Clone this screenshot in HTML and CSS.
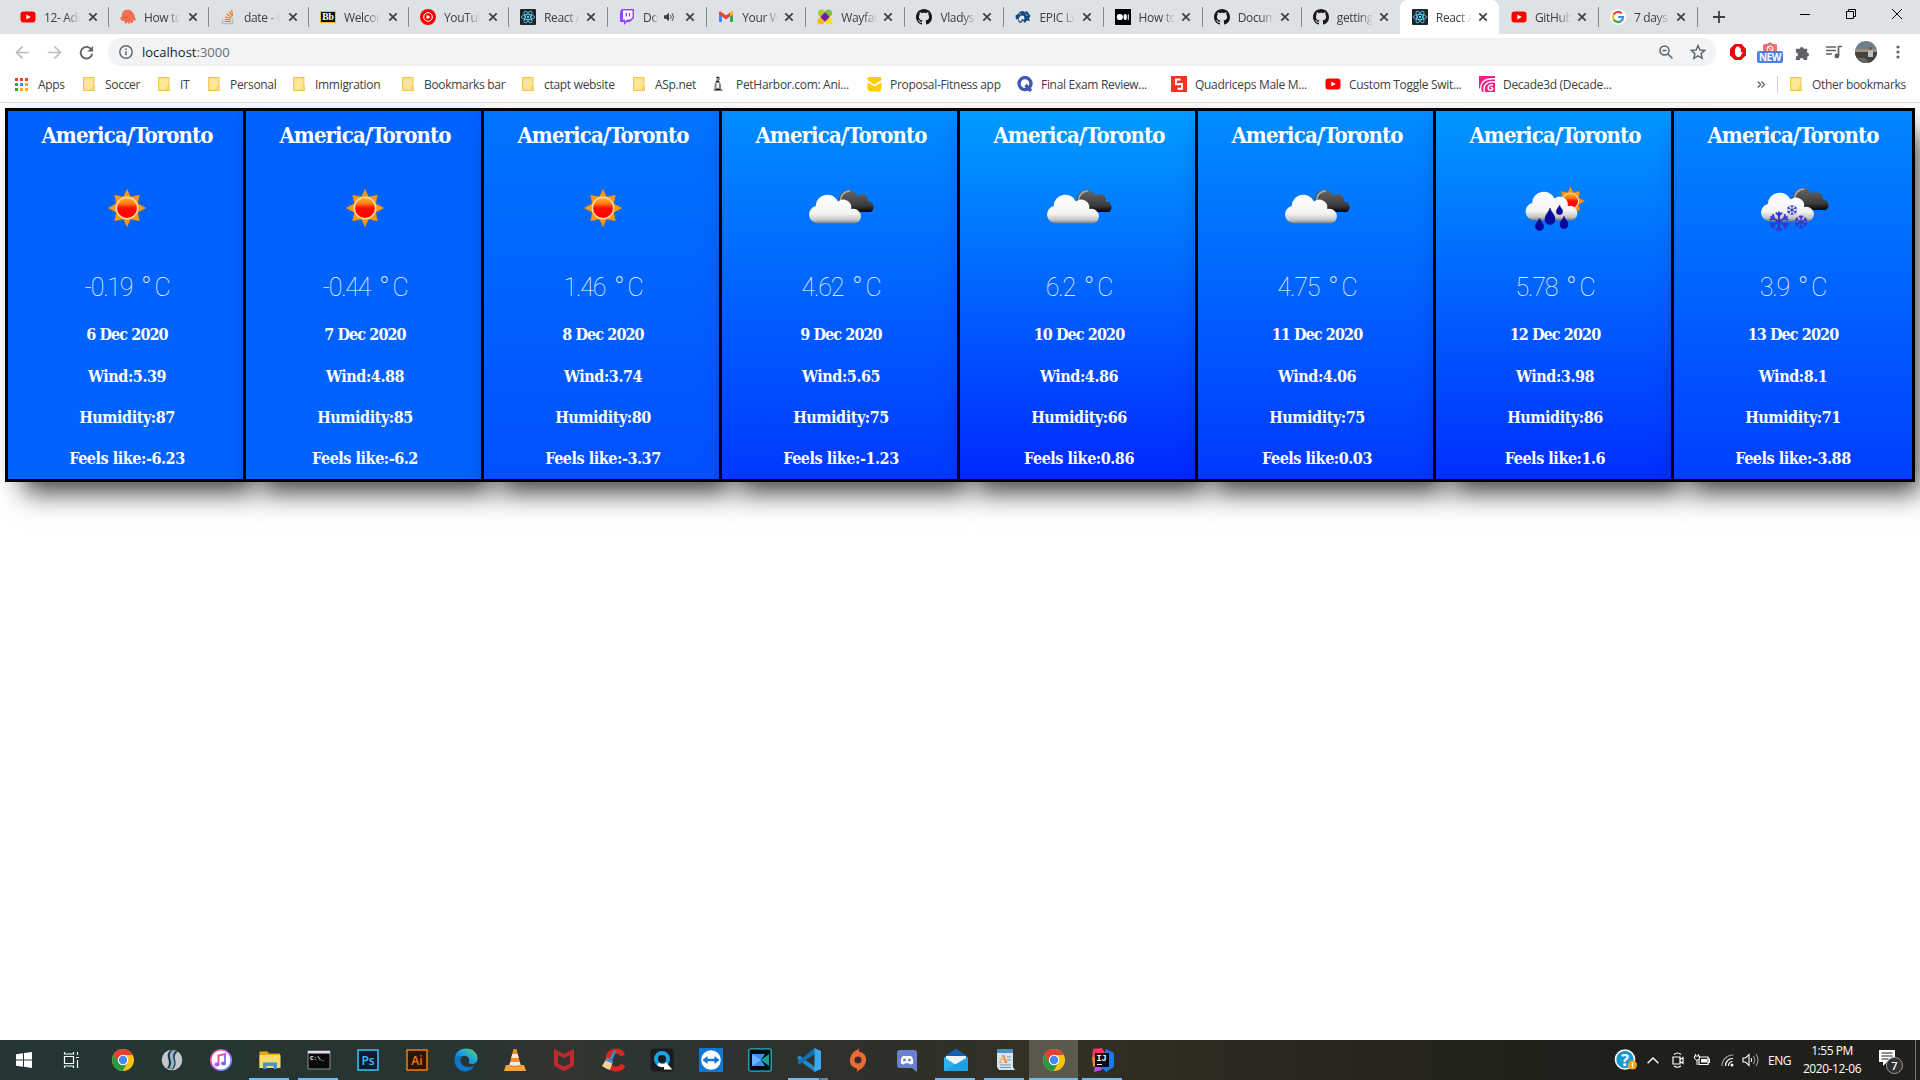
FILE: index.html
```html
<!DOCTYPE html>
<html lang="en">
<head>
<meta charset="utf-8">
<title>React App</title>
<link rel="stylesheet" href="styles.css">
</head>
<body>
<svg class="defs" aria-hidden="true">
  <defs>
    <linearGradient id="g-white" x1="0" y1="0" x2="0" y2="1"><stop offset="0" stop-color="#fff"/><stop offset=".66" stop-color="#f4f4f4"/><stop offset=".88" stop-color="#c4c4c4"/><stop offset="1" stop-color="#777"/></linearGradient>
    <linearGradient id="g-dark" x1="0" y1="0" x2="0" y2="1"><stop offset="0" stop-color="#666"/><stop offset=".7" stop-color="#3c3c3c"/><stop offset="1" stop-color="#050505"/></linearGradient>
    <linearGradient id="g-sun" x1="0" y1="0" x2="0" y2="1"><stop offset="0" stop-color="#ffb52e"/><stop offset=".3" stop-color="#ff7a10"/><stop offset=".5" stop-color="#ff0c00"/><stop offset="1" stop-color="#f00"/></linearGradient>
    <linearGradient id="g-edge" x1="0" y1="1" x2="1" y2="0"><stop offset="0" stop-color="#0c59a4"/><stop offset=".5" stop-color="#1b9de2"/><stop offset="1" stop-color="#5fdc62"/></linearGradient>
    <linearGradient id="g-itunes" x1="0" y1="0" x2="1" y2="1"><stop offset="0" stop-color="#fb4d6e"/><stop offset=".5" stop-color="#c35be8"/><stop offset="1" stop-color="#3fa9f5"/></linearGradient>
  </defs>
  <symbol id="youtube" viewBox="0 0 16 16"><rect x=".5" y="2.5" width="15" height="11" rx="3" fill="#f00"/><path d="M6.3 5.4 10.8 8l-4.5 2.6z" fill="#fff"/></symbol>
  <symbol id="hippo" viewBox="0 0 16 16"><path d="M2 6C2 2 5 .3 8.500.8c4 .5 5.500 4 6.500 7.700l1 2.500-1.500.8-1.500-1V14h-2v-1.500l-1 2H8v-2l-1.500 2H5l-.5-2.500H2.500L.3 10C.3 8.500 1.500 8 2 6z" fill="#f0714f"/><path d="M3 8.500h5" stroke="#c9553a" stroke-width=".8"/></symbol>
  <symbol id="stack" viewBox="0 0 16 16"><path d="M2.500 9.500v5h10v-5" fill="none" stroke="#bcbbbb" stroke-width="1.400"/><path d="M4.500 12.500h6M4.600 10.300l6 .6M5.200 7.900l5.700 1.600M6.700 5.100l5 3.100M9 2.400l3.600 4.700M11.600 .8l1 5.500" stroke="#f48024" stroke-width="1.200"/></symbol>
  <symbol id="ytmusic" viewBox="0 0 16 16"><circle cx="8" cy="8" r="8" fill="#f00"/><circle cx="8" cy="8" r="4.300" fill="none" stroke="#fff"/><path d="m6.500 5.700 4 2.300-4 2.300z" fill="#fff"/></symbol>
  <symbol id="react" viewBox="0 0 16 16"><rect width="16" height="16" rx="1" fill="#20232a"/><g fill="none" stroke="#61dafb" stroke-width=".8"><ellipse cx="8" cy="8" rx="6.600" ry="2.600"/><ellipse cx="8" cy="8" rx="6.600" ry="2.600" transform="rotate(60 8 8)"/><ellipse cx="8" cy="8" rx="6.600" ry="2.600" transform="rotate(120 8 8)"/></g><circle cx="8" cy="8" r="1.200" fill="#61dafb"/></symbol>
  <symbol id="twitch" viewBox="0 0 16 16"><path d="M2.500 0H15v9l-4 4H8l-3 3v-3H1V3z" fill="#9146ff"/><path d="M4 1.500h9.500v6.800L11 10.500H8l-2 2v-2H4z" fill="#fff"/><path d="M7.300 4v3.500M10.500 4v3.500" stroke="#9146ff" stroke-width="1.400"/></symbol>
  <symbol id="gmail" viewBox="0 0 16 16"><path d="M1 3.500V13h3V7.500z" fill="#4285f4"/><path d="M15 3.500V13h-3V7.500z" fill="#34a853"/><path d="M1 3.500c0-1 1.300-1.300 2-.7l5 3.800 5-3.800c.7-.6 2-.3 2 .7v1.700l-7 5.300-7-5.300z" fill="#ea4335"/><path d="M12 3.600 13 2.800c.7-.6 2-.3 2 .7v1.700l-3 2.300z" fill="#fbbc04"/></symbol>
  <symbol id="wayfair" viewBox="0 0 16 16"><circle cx="4.500" cy="4" r="3.600" fill="#a4ce39"/><circle cx="11.500" cy="4" r="3.600" fill="#7ac142"/><circle cx="4" cy="12" r="3.600" fill="#fdb813"/><circle cx="12" cy="12" r="3.600" fill="#f7e51b"/><path d="m8 3.300 4.700 4.700L8 12.700 3.300 8z" fill="#7b189f"/></symbol>
  <symbol id="github" viewBox="0 0 16 16"><path d="M8 0C3.580 0 0 3.580 0 8c0 3.540 2.290 6.530 5.470 7.590.4.070.55-.17.55-.38 0-.19-.01-.82-.01-1.490-2.010.37-2.530-.49-2.690-.94-.09-.23-.48-.94-.82-1.130-.28-.15-.68-.52-.01-.53.63-.01 1.080.58 1.230.82.72 1.210 1.870.87 2.330.66.070-.52.28-.87.51-1.070-1.780-.2-3.640-.89-3.640-3.950 0-.87.31-1.590.82-2.150-.08-.2-.36-1.020.08-2.120 0 0 .67-.21 2.200.82.64-.18 1.320-.27 2-.27s1.360.09 2 .27c1.530-1.040 2.200-.82 2.200-.82.44 1.100.16 1.920.08 2.120.51.56.82 1.270.82 2.150 0 3.070-1.870 3.750-3.650 3.950.29.25.54.73.54 1.480 0 1.070-.01 1.930-.01 2.200 0 .21.15.46.55.38A8.010 8.010 0 0 0 16 8c0-4.420-3.580-8-8-8z" fill="#191717"/></symbol>
  <symbol id="epic" viewBox="0 0 16 16"><path d="M.5 6.500 3 5l2-2.500L8 2l2 1 2-1 3.500 5L14 9.500 15 12l-3-.5-2.500 2.500L8 11.500l-2 2.500-2.500-1L3 10l-2 .5z" fill="#174a7a"/><path d="M3.500 9.500 6 6.500l3 .5.5 2.500L8 11l-1-1.500-1 3-1.500-.5z" fill="#dcebf6"/><path d="m10.500 4.500 2 2.500M4 5.500l2-1.500" stroke="#9cc0dd"/></symbol>
  <symbol id="medium" viewBox="0 0 16 16"><rect width="16" height="16" fill="#000"/><circle cx="4.800" cy="8" r="3.100" fill="#fff"/><ellipse cx="10.200" cy="8" rx="1.700" ry="3" fill="#fff"/><path d="M13.300 5.200v5.600" stroke="#fff"/></symbol>
  <symbol id="google" viewBox="0 0 16 16"><circle cx="8" cy="8" r="8" fill="#fff"/><g fill="none" stroke-width="2.200"><path d="M11.700 4.500A5 5 0 0 0 3.600 5.700" stroke="#ea4335"/><path d="M3.600 5.700a5 5 0 0 0 0 4.700" stroke="#fbbc05"/><path d="M3.600 10.400a5 5 0 0 0 7.700 1.400" stroke="#34a853"/><path d="M11.300 11.800A5 5 0 0 0 13 8H8.200" stroke="#4285f4"/></g></symbol>
  <symbol id="close" viewBox="0 0 10 10"><path d="m1.300 1.300 7.400 7.400M8.700 1.300 1.300 8.700" stroke="#3c4043" stroke-width="1.700"/></symbol>
  <symbol id="folder" viewBox="0 0 16 16"><path d="M2.600 1.600h10.300v12.800H2.600z" fill="#ffe695" stroke="#edc84e" stroke-width="1.100"/><path d="M11.600 10.600h1.900v3.800h-1.900z" fill="#ffe695" stroke="#edc84e" stroke-width=".9"/></symbol>
  <symbol id="apps" viewBox="0 0 16 16"><path d="M1 2h3v3H1zM6 2h3v3H6zM11 2h3v3h-3z" fill="#ea4335"/><path d="M1 7h3v3H1zM1 12h3v3H1z" fill="#34a050"/><path d="M6 7h3v3H6z" fill="#4285f4"/><path d="M11 7h3v3h-3zM6 12h3v3H6zM11 12h3v3h-3z" fill="#f9ab00"/></symbol>
  <symbol id="pet" viewBox="0 0 16 16"><path d="M4.500 .5h3L8 3.500 7 4.500l2 4V13l2.500 2H1.500l1-3V8l2-4z" fill="#888"/><path d="M4.500 7H7v5H4.500z" fill="#eee"/><path d="M4.500 1.500h2M3.500 13.500h5M4 5.500h3" stroke="#111"/></symbol>
  <symbol id="proposal" viewBox="0 0 16 16"><path d="M1.500 2.500Q1.500 1 3 1h11q1.500 0 1.500 1.500V4l-7 4.500-7-4.500z" fill="#fc0"/><path d="m1.500 6.500 7 4 7-4V12q0 3.500-3.500 3.500H5Q1.500 15.500 1.500 12z" fill="#fc0"/></symbol>
  <symbol id="quiz" viewBox="0 0 16 16"><circle cx="8" cy="7.600" r="6" fill="none" stroke="#4257b2" stroke-width="3.400"/><path d="m8.500 9 5.500 6" stroke="#4257b2" stroke-width="3.400"/></symbol>
  <symbol id="quad" viewBox="0 0 16 16"><rect width="16" height="16" fill="#ee3524"/><path d="M9.500 3.500H5v4.700h3.500M6.500 12.800H11V8H8" fill="none" stroke="#fff" stroke-width="1.900"/></symbol>
  <symbol id="decade" viewBox="0 0 16 16"><path d="M0 0h16v16H3.500L0 12z" fill="#f81b84"/><path d="M2 16C0 7 5 2 16 2.700M5.500 16C3.500 9 8 5 16 6" fill="none" stroke="#fff" stroke-width="1.500"/><path d="M14 9c-5-1-6.500 4.500-3 5.200 3 .3 4-3.200.5-2.700" fill="none" stroke="#fff" stroke-width="1.500"/></symbol>
  <symbol id="chrome" viewBox="0 0 24 24"><circle cx="12" cy="12" r="11" fill="#fbc116"/><path d="M2.500 6.500A11 11 0 0 1 21.800 7H12a5.200 5.200 0 0 0-4.700 7.300z" fill="#e34133"/><path d="M2.500 6.500A11 11 0 0 0 11.500 23l5-8.500a5.200 5.200 0 0 1-9 0z" fill="#279847"/><circle cx="12" cy="12" r="5.200" fill="#fff"/><circle cx="12" cy="12" r="4.200" fill="#4688f4"/></symbol>

  <symbol id="star" viewBox="-20 -20 40 40"><path d="M0-19 3.600-11.200 12.500-13 10.800-4.500 19 0 10.800 4.500 12.500 13 3.600 11.200 0 19-3.600 11.200-12.500 13-10.800 4.500-19 0-10.800-4.500-12.500-13-3.600-11.200z" fill="#f59a17" stroke="#c07a30" stroke-width=".5"/><circle r="10.700" fill="url(#g-sun)" stroke="#ffdca6" stroke-width="1.500"/></symbol>
  <symbol id="cloud-w" viewBox="0 0 54 31" preserveAspectRatio="none"><path d="M9 30.500a9 9 0 0 1-1.500-17.600A11.500 11.500 0 0 1 29.500 8.500 8 8 0 0 1 42.500 16a7.300 7.300 0 0 1 4 14.500z" fill="url(#g-white)"/></symbol>
  <symbol id="cloud-d" viewBox="0 0 36 23" preserveAspectRatio="none"><path d="M2 16A10 10 0 0 1 9 1a8.500 8.500 0 0 1 8.500 5.500 6 6 0 0 1 10 5.500A5.500 5.500 0 0 1 30.500 22H14z" fill="url(#g-dark)"/><path d="M2.500 12C2 6 6 2 11 2" fill="none" stroke="#aaa" stroke-width="1.500"/></symbol>
  <symbol id="drop" viewBox="0 0 10 16" preserveAspectRatio="none"><path d="M5 0c1 4 4.700 6.500 4.700 10.500a4.700 5 0 0 1-9.400 0C.3 6.500 4 4 5 0z" fill="#0809a0" stroke="#10106a" stroke-width=".5"/></symbol>
  <symbol id="flake" viewBox="-10 -10 20 20"><g stroke="#3437c4" stroke-width="1.800" fill="none"><path d="M0-9.500v19M-3-8.500l3 3 3-3M-3 8.500l3-3 3 3"/><path transform="rotate(60)" d="M0-9.500v19M-3-8.500l3 3 3-3M-3 8.500l3-3 3 3"/><path transform="rotate(120)" d="M0-9.500v19M-3-8.500l3 3 3-3M-3 8.500l3-3 3 3"/></g></symbol>
  <symbol id="w-sun" viewBox="0 0 100 100"><use href="#star" x="30" y="30" width="40" height="40"/></symbol>
  <symbol id="w-clouds" viewBox="0 0 100 100"><use href="#cloud-d" x="47" y="31" width="39" height="24"/><use href="#cloud-w" x="17" y="35" width="55" height="31"/></symbol>
  <symbol id="w-rain" viewBox="0 0 100 100"><use href="#star" x="50.500" y="28" width="30" height="30"/><use href="#cloud-w" x="19.500" y="32" width="55" height="31"/><use href="#drop" x="30" y="60" width="9" height="13"/><use href="#drop" x="39.500" y="50" width="11" height="17"/><use href="#drop" x="51" y="47" width="7" height="10"/><use href="#drop" x="54.500" y="58" width="9" height="13"/></symbol>
  <symbol id="w-snow" viewBox="0 0 100 100"><use href="#cloud-d" x="49" y="29" width="40" height="24"/><use href="#cloud-w" x="17" y="33" width="56" height="31"/><use href="#flake" x="25.500" y="53" width="21" height="21"/><use href="#flake" x="43.500" y="46.500" width="11" height="11"/><use href="#flake" x="51" y="57" width="14" height="14"/></symbol>
</svg>

<header class="tabs">
  <div class="tab wide"><svg class="fav"><use href="#youtube"/></svg><span class="name">12- Add</span><svg class="x"><use href="#close"/></svg></div>
  <div class="tab wide"><svg class="fav"><use href="#hippo"/></svg><span class="name">How to</span><svg class="x"><use href="#close"/></svg></div>
  <div class="tab wide"><svg class="fav"><use href="#stack"/></svg><span class="name">date - G</span><svg class="x"><use href="#close"/></svg></div>
  <div class="tab wide"><svg class="fav" viewBox="0 0 16 16"><rect x=".5" y="2.500" width="15" height="11" fill="#111" stroke="#f2b632"/><text x="8" y="11.300" font-family="Liberation Serif" font-weight="700" font-size="9.500" letter-spacing="0" text-anchor="middle" fill="#fff">Bb</text></svg><span class="name">Welcome</span><svg class="x"><use href="#close"/></svg></div>
  <div class="tab wide"><svg class="fav"><use href="#ytmusic"/></svg><span class="name">YouTube</span><svg class="x"><use href="#close"/></svg></div>
  <div class="tab"><svg class="fav"><use href="#react"/></svg><span class="name">React A</span><svg class="x"><use href="#close"/></svg></div>
  <div class="tab"><svg class="fav"><use href="#twitch"/></svg><span class="name short">Doc</span><svg class="sound" viewBox="0 0 10 10"><path d="M0 3.300h2L5 .8v8.400L2 6.700H0z" fill="#3c4043"/><path d="M6.500 3q1.400 2 0 4M8.200 1.200q2.600 3.800 0 7.600" fill="none" stroke="#3c4043" stroke-width=".9"/></svg><svg class="x"><use href="#close"/></svg></div>
  <div class="tab"><svg class="fav"><use href="#gmail"/></svg><span class="name">Your We</span><svg class="x"><use href="#close"/></svg></div>
  <div class="tab"><svg class="fav"><use href="#wayfair"/></svg><span class="name">Wayfair</span><svg class="x"><use href="#close"/></svg></div>
  <div class="tab"><svg class="fav"><use href="#github"/></svg><span class="name">Vladysl</span><svg class="x"><use href="#close"/></svg></div>
  <div class="tab"><svg class="fav"><use href="#epic"/></svg><span class="name">EPIC Le</span><svg class="x"><use href="#close"/></svg></div>
  <div class="tab"><svg class="fav"><use href="#medium"/></svg><span class="name">How to</span><svg class="x"><use href="#close"/></svg></div>
  <div class="tab"><svg class="fav"><use href="#github"/></svg><span class="name">Docume</span><svg class="x"><use href="#close"/></svg></div>
  <div class="tab before"><svg class="fav"><use href="#github"/></svg><span class="name">getting-</span><svg class="x"><use href="#close"/></svg></div>
  <div class="tab active"><svg class="fav"><use href="#react"/></svg><span class="name">React A</span><svg class="x"><use href="#close"/></svg></div>
  <div class="tab"><svg class="fav"><use href="#youtube"/></svg><span class="name">GitHub</span><svg class="x"><use href="#close"/></svg></div>
  <div class="tab"><svg class="fav"><use href="#google"/></svg><span class="name">7 days f</span><svg class="x"><use href="#close"/></svg></div>
  <svg class="plus" viewBox="0 0 12 12"><path d="M6 0v12M0 6h12" stroke="#3c4043" stroke-width="1.800"/></svg>
  <div class="window-buttons">
    <svg viewBox="0 0 10 10"><path d="M0 5.500h10" stroke="#000"/></svg>
    <svg viewBox="0 0 10 10"><path d="M.5 2.500h7v7h-7zM2.500 2V.5h7v7H8" fill="none" stroke="#000"/></svg>
    <svg viewBox="0 0 10 10"><path d="m0 0 10 10M10 0 0 10" stroke="#000"/></svg>
  </div>
</header>

<div class="toolbar">
  <div class="nav">
    <svg viewBox="0 0 16 16"><path d="M15 8H2M8 1.700 1.700 8 8 14.300" fill="none" stroke="#babcbe" stroke-width="1.800"/></svg>
    <svg viewBox="0 0 16 16"><path d="M1 8h13M8 1.700 14.300 8 8 14.300" fill="none" stroke="#babcbe" stroke-width="1.800"/></svg>
    <svg viewBox="0 0 16 16"><path d="M13.300 5A6.200 6.200 0 1 0 14.100 9.300" fill="none" stroke="#5f6368" stroke-width="2"/><path d="M15 1v6H9z" fill="#5f6368"/></svg>
  </div>
  <div class="omnibox">
    <svg class="info" viewBox="0 0 14 14"><circle cx="7" cy="7" r="6.200" fill="none" stroke="#5f6368" stroke-width="1.400"/><path d="M7 6.200v4M7 3.500V5" stroke="#5f6368" stroke-width="1.500"/></svg>
    <span class="url">localhost<i>:3000</i></span>
    <svg class="lens" viewBox="0 0 14 14"><circle cx="5.500" cy="5.500" r="4.500" fill="none" stroke="#5f6368" stroke-width="1.500"/><path d="m9 9 4.500 4.500M3.500 5.500h4" stroke="#5f6368" stroke-width="1.500"/></svg>
    <svg class="fav-star" viewBox="0 0 16 16"><path d="m8 1.500 1.900 4.500 4.900.4-3.700 3.200 1.100 4.800L8 11.900l-4.200 2.500 1.100-4.800L1.200 6.400 6.100 6z" fill="none" stroke="#5f6368" stroke-width="1.400"/></svg>
  </div>
  <div class="extensions">
    <svg class="e1" viewBox="0 0 16 16"><path d="M4.700 0h6.600L16 4.700v6.600L11.300 16H4.700L0 11.300V4.700z" fill="#e40d0d"/><path d="M5 7V4.500h1V3h1.200v-.8h1.200V3h1.200v1.300h1.200V9l1-1.200.9.700L9.800 13H7L5 10.500z" fill="#fff"/></svg>
    <div class="new"><svg viewBox="0 0 14 12"><path d="M7 0 9 1.500l5 1V9L7 12 0 9V2.500l5-1z" fill="#ef7070"/><circle cx="7" cy="7" r="3" fill="none" stroke="#fff"/><path d="m5 5 4 4" stroke="#fff"/></svg><b>NEW</b></div>
    <svg class="e3" viewBox="0 0 16 16"><path d="M1 4h4.200a2 2 0 1 1 4 0H13v4.200a2 2 0 1 1 0 4V16H9.300a2 2 0 1 0-4.200 0H1v-3.700a2.100 2.100 0 1 0 0-4.200z" fill="#5f6368"/></svg>
    <svg class="e4" viewBox="0 0 16 14"><path d="M0 2h10M0 5.500h10M0 9h6M12.500 11V1.500H16" fill="none" stroke="#5f6368" stroke-width="1.700"/><circle cx="10.900" cy="11" r="2.400" fill="#5f6368"/></svg>
    <svg class="avatar" viewBox="0 0 22 22"><clipPath id="av"><circle cx="11" cy="11" r="11"/></clipPath><g clip-path="url(#av)"><path d="M0 0h22v22H0z" fill="#6d8089"/><path d="M0 8h22v4H0z" fill="#a08f7c"/><path d="M0 11h22v11H0z" fill="#45413d"/><path d="m13 10 3-1 2 1v6h-5z" fill="#b4c1cc"/><circle cx="15.500" cy="7.500" r="1.500" fill="#79563e"/><path d="M1 17h9l5 5H1z" fill="#6a6862"/></g></svg>
    <svg class="dots" viewBox="0 0 4 14"><circle cx="2" cy="2" r="1.600"/><circle cx="2" cy="7" r="1.600"/><circle cx="2" cy="12" r="1.600"/></svg>
  </div>
</div>

<nav class="bookmarks">
  <div class="marks">
    <a><svg class="fav"><use href="#apps"/></svg>Apps</a>
    <a><svg class="fav"><use href="#folder"/></svg>Soccer</a>
    <a><svg class="fav"><use href="#folder"/></svg>IT</a>
    <a><svg class="fav"><use href="#folder"/></svg>Personal</a>
    <a><svg class="fav"><use href="#folder"/></svg>Immigration</a>
    <a><svg class="fav"><use href="#folder"/></svg>Bookmarks bar</a>
    <a><svg class="fav"><use href="#folder"/></svg>ctapt website</a>
    <a><svg class="fav"><use href="#folder"/></svg>ASp.net</a>
    <a><svg class="fav"><use href="#pet"/></svg>PetHarbor.com: Ani...</a>
    <a><svg class="fav"><use href="#proposal"/></svg>Proposal-Fitness app</a>
    <a><svg class="fav"><use href="#quiz"/></svg>Final Exam Review...</a>
    <a><svg class="fav"><use href="#quad"/></svg>Quadriceps Male M...</a>
    <a><svg class="fav"><use href="#youtube"/></svg>Custom Toggle Swit...</a>
    <a><svg class="fav"><use href="#decade"/></svg>Decade3d (Decade...</a>
  </div>
  <svg class="more" viewBox="0 0 8 7"><path d="m.7.5 3 3-3 3M4.500.5l3 3-3 3" fill="none" stroke="#5f6368" stroke-width="1.300"/></svg>
  <a class="other"><svg class="fav"><use href="#folder"/></svg>Other bookmarks</a>
</nav>

<main class="page">
  <div class="forecast">
    <section class="card t0"><h2>America/Toronto</h2><svg class="weather"><use href="#w-sun"/></svg><p class="temp">-0.19 <i>°</i>C</p><p class="date">6 Dec 2020</p><p>Wind:5.39</p><p>Humidity:87</p><p>Feels like:-6.23</p></section>
    <section class="card t0"><h2>America/Toronto</h2><svg class="weather"><use href="#w-sun"/></svg><p class="temp">-0.44 <i>°</i>C</p><p class="date">7 Dec 2020</p><p>Wind:4.88</p><p>Humidity:85</p><p>Feels like:-6.2</p></section>
    <section class="card t1"><h2>America/Toronto</h2><svg class="weather"><use href="#w-sun"/></svg><p class="temp">1.46 <i>°</i>C</p><p class="date">8 Dec 2020</p><p>Wind:3.74</p><p>Humidity:80</p><p>Feels like:-3.37</p></section>
    <section class="card t4"><h2>America/Toronto</h2><svg class="weather"><use href="#w-clouds"/></svg><p class="temp">4.62 <i>°</i>C</p><p class="date">9 Dec 2020</p><p>Wind:5.65</p><p>Humidity:75</p><p>Feels like:-1.23</p></section>
    <section class="card t6"><h2>America/Toronto</h2><svg class="weather"><use href="#w-clouds"/></svg><p class="temp">6.2 <i>°</i>C</p><p class="date">10 Dec 2020</p><p>Wind:4.86</p><p>Humidity:66</p><p>Feels like:0.86</p></section>
    <section class="card t4"><h2>America/Toronto</h2><svg class="weather"><use href="#w-clouds"/></svg><p class="temp">4.75 <i>°</i>C</p><p class="date">11 Dec 2020</p><p>Wind:4.06</p><p>Humidity:75</p><p>Feels like:0.03</p></section>
    <section class="card t5"><h2>America/Toronto</h2><svg class="weather"><use href="#w-rain"/></svg><p class="temp">5.78 <i>°</i>C</p><p class="date">12 Dec 2020</p><p>Wind:3.98</p><p>Humidity:86</p><p>Feels like:1.6</p></section>
    <section class="card t3"><h2>America/Toronto</h2><svg class="weather"><use href="#w-snow"/></svg><p class="temp">3.9 <i>°</i>C</p><p class="date">13 Dec 2020</p><p>Wind:8.1</p><p>Humidity:71</p><p>Feels like:-3.88</p></section>
  </div>
</main>

<footer class="taskbar">
  <div class="sys"><svg width="16" height="16" viewBox="0 0 16 16"><path d="M0 2.300 7 1.200v6.300H0zM8 1.100 16 0v7.500H8zM0 8.500h7v6.300l-7-1zM8 8.500h8V16l-8-1.200z" fill="#fff"/></svg></div>
  <div class="sys"><svg width="17" height="16" viewBox="0 0 17 16"><path d="M1.500 4.500h9v7h-9zM1.500 0v2h9V0M1.500 16v-2h9v2M14.500 0v3M14.500 8v8M13 5.500h3" fill="none" stroke="#fff" stroke-width="1.200"/></svg></div>
  <div class="apps">
    <div><svg viewBox="0 0 24 24"><use href="#chrome"/></svg></div>
    <div><svg viewBox="0 0 24 24"><circle cx="12" cy="12" r="10.300" fill="#c3c8ca"/><path d="M11 2c-8 6 2 11-4 18l6 1.500c7-8-3-12 5-18z" fill="#23343f"/><path d="M12.500 2.500c-7 6 2.500 11-3.500 17.500l3 1c6.500-7.500-3-12 3.500-17.500z" fill="#8fb2c6"/></svg></div>
    <div><svg viewBox="0 0 24 24"><circle cx="12" cy="12" r="10.300" fill="#fff" stroke="url(#g-itunes)" stroke-width="1.600"/><path d="M9.500 16.500V7.500L16 6v9" fill="none" stroke="url(#g-itunes)" stroke-width="2"/><ellipse cx="8" cy="16.500" rx="2.500" ry="2" fill="#a55be8"/><ellipse cx="14.500" cy="15.500" rx="2.500" ry="2" fill="#7a6be8"/></svg></div>
    <div class="open"><svg viewBox="0 0 24 24"><path d="M1.500 3.500h8l1.500 2h11V20h-20.500z" fill="#e4a512"/><path d="M1.500 7h21v13h-21z" fill="#fddb6d"/><path d="M5 21v-6.500h14V21h-3.500v-3h-7v3z" fill="#3e96d8"/></svg></div>
    <div class="open"><svg viewBox="0 0 24 24"><path d="M1 3h22v18H1z" fill="#0a0a0a" stroke="#8b8f92"/><path d="M1 3h22v2.500H1z" fill="#dfe3e6"/><text x="3" y="12" font-family="Liberation Mono" font-size="6" font-weight="700" fill="#fff">C:\_</text></svg></div>
    <div><svg viewBox="0 0 24 24"><path d="M2 2h20v20H2z" fill="#0b1a2d" stroke="#3fc3f7" stroke-width="1.500"/><text x="12" y="16.500" font-family="Open Sans" font-size="12" font-weight="600" text-anchor="middle" fill="#3fc3f7">Ps</text></svg></div>
    <div><svg viewBox="0 0 24 24"><path d="M2 2h20v20H2z" fill="#2a1503" stroke="#f27b0f" stroke-width="1.500"/><text x="12" y="16.500" font-family="Open Sans" font-size="12" font-weight="600" text-anchor="middle" fill="#f27b0f">Ai</text></svg></div>
    <div><svg viewBox="0 0 24 24"><path d="M.5 11C1 4.500 6 .5 12 .5c7 0 12 5 11.500 10.500 0 4-4 5.500-7 5-2-.3-2-1.500-1.500-2.500 1-3-1-5.500-4.500-5.500C6 8 2 9 .5 12z" fill="url(#g-edge)"/><path d="M.5 12c1-3 5-4.500 8-3.500-4 3-2 10 5 10.500 3 .2 5-.5 7-2-2 4.500-6 6.500-9.500 6.500C5 23.500.5 18 .5 12z" fill="#1176c8"/></svg></div>
    <div><svg viewBox="0 0 24 24"><path d="M3 17h18l2 6H1z" fill="#f5a33c"/><path d="M10.500 1h3L18 18q-6 3-12 0z" fill="#f78c1f"/><path d="M9.300 6h5.400l1 4H8.300zM7.200 14h9.600l.7 2.800q-5.500 2-11 0z" fill="#eee"/></svg></div>
    <div><svg viewBox="0 0 24 24"><path d="m2 1 10 5 10-5v17l-10 5-10-5zM6 7v8.500l6 3 6-3V7l-6 3z" fill="#c12a2d" fill-rule="evenodd"/></svg></div>
    <div><svg viewBox="0 0 24 24"><path d="M22 7.500C20 3.500 17 3 14.500 3 9.500 3 7 7.500 7 12s3 9 8 9c3 0 5.500-1 7.500-4" fill="none" stroke="#d8281f" stroke-width="5"/><path d="m13 2 2.500 1-4 9-3-1.500z" fill="#3986c9"/><path d="m6 10 6 3-3 9-3-1-5-3z" fill="#f2d29a"/><path d="m6 10 6 3-.7 2.500-7-3z" fill="#3f8fd0"/></svg></div>
    <div><svg viewBox="0 0 24 24"><rect x=".5" y=".5" width="23" height="23" rx="4" fill="#1c1a1f"/><circle cx="12" cy="11" r="6" fill="none" stroke="#18a4e0" stroke-width="4"/><path d="M8 16q4 3 8 .5l3 3.500h-5" fill="none" stroke="#fff" stroke-width="3"/></svg></div>
    <div><svg viewBox="0 0 24 24"><path d="M0 0h24v24H0z" fill="#0f77d6"/><circle cx="12" cy="12" r="9.800" fill="#fff"/><path d="m3.500 12 5-4v2.700h7V8l5 4-5 4v-2.700h-7V16z" fill="#0f77d6"/></svg></div>
    <div><svg viewBox="0 0 24 24"><rect x=".8" y=".8" width="22.400" height="22.400" rx="2" fill="#050b10" stroke="#19b5c9" stroke-width="1.300"/><path d="M4 6h13l-4 6 4 6H4z" fill="#3d8ff0"/><path d="m4 6 9 6-9 6z" fill="#68b4ff"/><path d="M21 6v12l-8-6z" fill="#16a48e"/></svg></div>
    <div class="open split"><svg viewBox="0 0 24 24"><path d="M0 9.500 2.500 7.500 18 19v5L1 11.500z" fill="#2489ca"/><path d="M0 14.500 17.500 0 18 6 2.500 16.500z" fill="#1070b3"/><path d="M17.500 0 24 3v18l-6.500 3z" fill="#3aaaf0"/></svg></div>
    <div><svg viewBox="0 0 24 24"><path d="M14 0c-2 2-1 3-.5 4C22 5 22 16 15 21l-5 3c2-2 1-3 .5-4C2 19 2 8 9 3z" fill="#ee6a35"/><circle cx="12" cy="12" r="3.600" fill="#33302a"/></svg></div>
    <div><svg viewBox="0 0 24 24"><path d="M5 2h14q3 0 3 3v19l-5-4H5q-3 0-3-3V5q0-3 3-3z" fill="#6c7fce"/><path d="M6 15.500q-1-4.500 2-7.500h8q3 3 2 7.500-3 2-4-.2h-4q-1 2.200-4 .2z" fill="#fff"/><circle cx="9.500" cy="12" r="1.400" fill="#6c7fce"/><circle cx="14.500" cy="12" r="1.400" fill="#6c7fce"/></svg></div>
    <div class="open"><svg viewBox="0 0 24 24"><path d="M0 9 12 .5 24 9v14H0z" fill="#0f63b5"/><path d="M2 8h20v8H2z" fill="#f1f5f8"/><path d="m0 9 12 8 12-8v14H0z" fill="#2bb2ef"/><path d="m0 23 24-14v14z" fill="#1fa0e6"/></svg></div>
    <div class="open"><svg viewBox="0 0 24 24"><path d="M4 1h16v18l2 3H6l-2-3z" fill="#d4e6f4"/><path d="M4 1h16v4H4z" fill="#4d91c7"/><text x="6" y="14.500" font-family="Liberation Serif" font-weight="700" font-size="12" fill="#ef8a1d">A</text><path d="M14 9h4M14 12h4M7 17h11M7 19.500h11" stroke="#7995aa"/></svg></div>
    <div class="open current"><svg viewBox="0 0 24 24"><use href="#chrome"/></svg></div>
    <div class="open"><svg viewBox="0 0 24 24"><path d="m2 1 9-1 3 5-9 9-4-5z" fill="#fc3568"/><path d="m15 1 8 4v14l-8 5-6-6z" fill="#157cf0"/><path d="m1 9 5 1v7l-4 2z" fill="#f58529"/><path d="m4 16 6 1 1 5-8 2z" fill="#b74ae8"/><path d="M4 5h14v14H4z" fill="#08080c"/><text x="5.500" y="12.500" font-family="Liberation Mono" font-weight="700" font-size="8.500" fill="#fff">IJ</text><path d="M6 16.500h5" stroke="#fff"/></svg></div>
  </div>
  <div class="tray">
    <svg class="help" viewBox="0 0 24 22"><circle cx="11" cy="10.500" r="9.500" fill="#1b9ad2" stroke="#fff" stroke-width="1.600"/><text x="11" y="16.500" font-family="Open Sans" font-weight="700" font-size="16" text-anchor="middle" fill="#fff">?</text><circle cx="18.500" cy="16" r="4.500" fill="#f2a51d"/><path d="M18.500 13.500v5" stroke="#fff" stroke-width="1.200"/></svg>
    <svg class="chev" viewBox="0 0 12 7"><path d="m.6 6.300 5.400-5.300 5.400 5.300" fill="none" stroke="#fff" stroke-width="1.300"/></svg>
    <svg class="meet" viewBox="0 0 12 16"><path d="M1 5h7v7H1zM8 7.500l3-2v6l-3-2M2 2.500q3.500-3 7 0M2 14q3.500 2.500 7 0" fill="none" stroke="#fff" stroke-width="1.200"/></svg>
    <svg class="batt" viewBox="0 0 16 12"><path d="M5 3h9v7.500H5zM14.500 5h1v3.500h-1" fill="none" stroke="#fff" stroke-width="1.200"/><path d="M7 5h6v3.500H7z" fill="#fff"/><path d="M.5 2h5v2.500L3.500 6h-1L.5 4.500zM1.500 0v2M4.500 0v2M3 6v5" fill="#20211a" stroke="#fff"/></svg>
    <svg class="wifi" viewBox="0 0 13 14"><circle cx="11" cy="12" r="1.500" fill="#fff"/><path d="M7.500 13a4 4 0 0 1 4-4.500M4.500 13a7 7 0 0 1 7.500-7.500" fill="none" stroke="#fff" stroke-width="1.200"/><path d="M1 13A11 11 0 0 1 12.500 2" fill="none" stroke="#999" stroke-width="1.200"/></svg>
    <svg class="vol" viewBox="0 0 17 14"><path d="M1 5h2.500L7 1.500v11L3.500 9H1z" fill="none" stroke="#fff" stroke-width="1.100"/><path d="M9 5q1.500 2 0 4" fill="none" stroke="#fff"/><path d="M11.500 3q3 4 0 8M14 1q4 6 0 12" fill="none" stroke="#aaa"/></svg>
    <span class="lang">ENG</span>
    <div class="clock"><span>1:55 PM</span><span>2020-12-06</span></div>
    <svg class="note" viewBox="0 0 25 24"><path d="M0 0h16v12H8l-4 4v-4H0z" fill="#fff"/><path d="M2.500 3h11M2.500 6h11M2.500 9h7" stroke="#20211a"/><circle cx="15.500" cy="15.500" r="8" fill="#303030" stroke="#999"/><text x="15.500" y="19.500" font-family="Open Sans" font-size="11" font-weight="600" text-anchor="middle" fill="#fff">7</text></svg>
    <i class="peek"></i>
  </div>
</footer>
</body>
</html>
```
FILE: styles.css
```css
* { box-sizing: border-box; }
html, body { height: 100%; }
body {
  margin: 0;
  display: flex;
  flex-direction: column;
  overflow: hidden;
  background: #fff;
  font: 12px "Open Sans", "Noto Sans", sans-serif;
  color: #3c4043;
}
svg { display: block; flex: none; }
.defs { position: absolute; width: 0; height: 0; }
.fav { width: 16px; height: 16px; }

/* tab strip */
.tabs {
  display: flex;
  height: 34px;
  flex: none;
  padding-left: 8px;
  background: #dee1e6;
}
.tab {
  position: relative;
  display: flex;
  align-items: center;
  width: 99.1px;
  flex: none;
  padding: 0 11px 0 12px;
}
.tab.wide { width: 100px; padding-right: 10px; }
.tab::after {
  content: "";
  position: absolute;
  right: -1px;
  top: 7px;
  width: 1px;
  height: 20px;
  background: #85888d;
}
.tab.active::after, .tab.before::after { display: none; }
.tab.active { background: #fff; border-radius: 8px 8px 0 0; }
.name {
  width: 36px;
  margin-left: 8px;
  overflow: hidden;
  white-space: nowrap;
  letter-spacing: -0.35px;
  -webkit-mask-image: linear-gradient(90deg, #000 62%, transparent);
  mask-image: linear-gradient(90deg, #000 62%, transparent);
}
.name.short { width: 15px; }
.sound { width: 10px; height: 10px; margin-left: 6px; }
.x { width: 10px; height: 10px; margin-left: auto; }
.plus { width: 12px; height: 12px; margin: 11px 0 0 16px; }
.window-buttons {
  display: flex;
  gap: 36px;
  margin: 9px 18px 0 auto;
}
.window-buttons svg { width: 10px; height: 10px; }

/* toolbar */
.toolbar {
  display: flex;
  align-items: center;
  height: 36px;
  flex: none;
}
.nav { display: flex; gap: 17px; width: 108px; padding-left: 15px; }
.nav svg { width: 15px; height: 15px; }
.omnibox {
  display: flex;
  align-items: center;
  width: 1608px;
  height: 28px;
  padding: 0 10px 0 11px;
  border-radius: 14px;
  background: #f1f3f4;
}
.info { width: 14px; height: 14px; }
.url { margin-left: 9px; font-size: 13px; letter-spacing: 0; color: #202124; }
.url i { font-style: normal; color: #6b6f74; }
.lens { width: 14px; height: 14px; margin-left: auto; }
.fav-star { width: 16px; height: 16px; margin-left: 17px; }
.extensions { display: flex; align-items: center; padding-left: 14px; }
.e1 { width: 16px; height: 16px; }
.new { position: relative; width: 26px; height: 21px; margin-left: 11px; padding-left: 6px; }
.new svg { width: 14px; height: 12px; }
.new b {
  position: absolute;
  left: 0;
  top: 9px;
  width: 26px;
  height: 12px;
  border-radius: 2px;
  background: #4a80e8;
  color: #fff;
  font-size: 10px;
  line-height: 12px;
  letter-spacing: -0.4px;
  text-align: center;
}
.e3 { width: 15px; height: 15px; margin-left: 12px; }
.e4 { width: 16px; height: 14px; margin-left: 16px; }
.avatar { width: 22px; height: 22px; margin-left: 13px; }
.dots { width: 4px; height: 14px; margin-left: 19px; fill: #5f6368; }

/* bookmarks */
.bookmarks {
  display: flex;
  align-items: center;
  height: 33px;
  flex: none;
  padding: 0 14px 4px;
  border-bottom: 1px solid #dadce0;
  letter-spacing: -0.3px;
  white-space: nowrap;
}
.bookmarks a { display: flex; align-items: center; gap: 8px; }
.marks {
  display: grid;
  grid-template-columns: 67px 75px 50px 85px 109px 120px 111px 81px 154px 151px 154px 154px 154px 150px;
}
.more { width: 8px; height: 7px; margin-left: auto; }
.other { margin-left: 12px; padding-left: 10px; border-left: 1px solid #cfd1d4; }

/* forecast */
.page { flex: 1; min-height: 0; overflow: hidden; padding: 5px 5px 0; }
.forecast { display: grid; grid-template-columns: repeat(8, 238px); }
.card {
  position: relative;
  width: 244px;
  height: 374px;
  border: 3px solid #000;
  box-shadow: 12px 18px 25px -7px rgba(0, 0, 0, .72), 0 0 18px rgba(0, 0, 0, .06);
  color: #fff;
  text-align: center;
  font-family: "DejaVu Serif", serif;
  font-stretch: condensed;
  font-weight: 700;
}
.t0 { background: #0062ff; }
.t1 { background: linear-gradient(#0074ff, #0050ff); }
.t3 { background: linear-gradient(#0086ff, #003eff); }
.t4 { background: linear-gradient(#008cff, #0038ff); }
.t5 { background: linear-gradient(#0096ff, #002eff); }
.t6 { background: linear-gradient(#009cff, #0028ff); }
.card h2 { margin: 0; font-size: 22px; line-height: 48px; letter-spacing: -0.9px; }
.weather { width: 100px; height: 100px; margin: -1px auto; }
.card p { margin: 0; font-size: 16px; line-height: 41px; letter-spacing: -0.45px; }
.card .temp {
  font: 100 25px/61px Roboto, sans-serif;
  letter-spacing: -1.2px;
  word-spacing: 4px;
}
.temp i { font-style: normal; font-size: 28px; line-height: 0; margin-right: 4px; }
.card .date { line-height: 34px; margin-bottom: 4px; letter-spacing: -0.9px; }

/* taskbar */
.taskbar {
  display: flex;
  height: 40px;
  flex: none;
  background: linear-gradient(90deg, #233633 0, #283431 480px, #33342f 560px, #2c3532 640px, #2e302b 860px, #333024 1050px, #27251d 1350px, #1f201a 1600px);
  color: #fff;
}
.sys { display: flex; align-items: center; justify-content: center; width: 48px; }
.sys + .sys { width: 50px; padding-right: 3px; }
.apps { display: flex; }
.apps > div {
  position: relative;
  display: flex;
  align-items: center;
  justify-content: center;
  width: 49px;
}
.apps svg { width: 24px; height: 24px; }
.open::after {
  content: "";
  position: absolute;
  left: 4px;
  right: 5px;
  bottom: 0;
  height: 2px;
  background: #76b9ed;
}
.apps .current { background: #5b594e; }
.current::after { left: 0; right: 0; }
.split::after { background: linear-gradient(90deg, #76b9ed 31px, #3e5568 31px, #3e5568 32px, #5f88a8 32px); }
.tray { display: flex; align-items: center; margin-left: auto; padding-right: 4px; }
.help { width: 24px; height: 22px; }
.chev { width: 12px; height: 7px; margin-left: 9px; }
.meet { width: 12px; height: 16px; margin-left: 13px; }
.batt { width: 16px; height: 12px; margin-left: 10px; }
.wifi { width: 13px; height: 14px; margin-left: 11px; }
.vol { width: 17px; height: 14px; margin-left: 8px; }
.lang { width: 24px; margin-left: 9px; letter-spacing: -0.5px; }
.clock {
  display: flex;
  flex-direction: column;
  width: 60px;
  margin-left: 10px;
  line-height: 18px;
  text-align: center;
  letter-spacing: -0.45px;
  white-space: nowrap;
}
.note { width: 25px; height: 24px; margin: 3px 0 0 17px; }
.peek { width: 1px; height: 40px; margin-left: 11px; background: #77776f; }
```
